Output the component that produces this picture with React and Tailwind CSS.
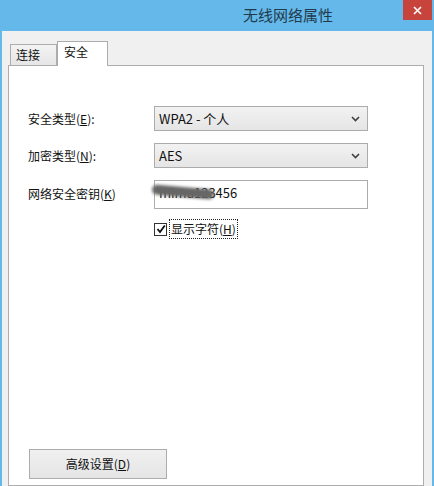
import React from "react";

function Chevron() {
  return (
    <svg width="9" height="6" viewBox="0 0 9 6" className="text-[#404040]">
      <path d="M1 1 L4.5 4.5 L8 1" fill="none" stroke="currentColor" strokeWidth="1.6" />
    </svg>
  );
}

function Select({ value }) {
  return (
    <div className="w-[214px] h-[25px] border border-[#acacac] bg-gradient-to-b from-[#f2f2f2] to-[#e5e5e5] flex items-center pl-[4px] pr-[7px] justify-between">
      <span className="text-[13px] text-[#111]">{value}</span>
      <Chevron />
    </div>
  );
}

export default function App() {
  const font = { fontFamily: '"Noto Sans CJK SC", "Noto Sans", sans-serif' };
  return (
    <div
      className="w-[434px] h-[486px] bg-[#64b9ea] relative overflow-hidden flex flex-col"
      style={font}
    >
      <div className="h-[31px] shrink-0 flex items-center pl-[243px]">
        <span className="text-[15px] text-[#1f3a4d]">无线网络属性</span>
      </div>
      <div className="absolute top-0 right-[2px] w-[29px] h-[20px] bg-[#c7443c] flex items-center justify-center">
        <svg width="9" height="9" viewBox="0 0 9 9">
          <path d="M1 1 L8 8 M8 1 L1 8" stroke="white" strokeWidth="1.6" />
        </svg>
      </div>
      <div className="flex-1 mx-[2px] bg-[#f0f0f0] pl-[6px] pr-[8px] pt-[9px] flex flex-col">
        <div className="flex items-end pl-[2px] h-[25px] relative z-10">
          <div className="w-[47px] h-[21px] border border-[#adadad] border-b-0 bg-gradient-to-b from-[#f3f3f3] to-[#e6e6e6] text-[12px] text-[#111] pl-[5px] leading-[20px]">
            连接
          </div>
          <div className="w-[51px] h-[25px] -mb-px border border-[#adadad] border-b-0 bg-white text-[12px] text-[#111] pl-[6px] leading-[19px]">
            安全
          </div>
        </div>
        <div className="flex-1 border border-[#adadad] bg-white pl-[19px] pt-[40px] flex flex-col">
          <div className="flex items-center h-[25px]">
            <span className="w-[126px] text-[12px] text-[#111]">
              安全类型(<span className="underline">E</span>):
            </span>
            <Select value="WPA2 - 个人" />
          </div>
          <div className="flex items-center h-[25px] mt-[12px]">
            <span className="w-[126px] text-[12px] text-[#111]">
              加密类型(<span className="underline">N</span>):
            </span>
            <Select value="AES" />
          </div>
          <div className="flex items-center h-[29px] mt-[12px]">
            <span className="w-[126px] text-[12px] text-[#111] -mt-[2px]">
              网络安全密钥(<span className="underline">K</span>)
            </span>
            <div className="w-[214px] h-[29px] border border-[#acacac] bg-white flex items-center pl-[4px] relative">
              <span className="text-[13px] text-[#111] -mt-[4px]">mima123456</span>
              <div className="absolute left-[-3px] top-[6px] w-[62px] h-[10px] bg-[#666] rounded-full blur-[1.5px] rotate-[5deg]" />
            </div>
          </div>
          <div className="flex items-center mt-[10px] pl-[126px]">
            <div className="w-[13px] h-[13px] border border-[#333] bg-white flex items-center justify-center">
              <svg width="10" height="10" viewBox="0 0 10 10">
                <path d="M1.5 5 L4 8 L8.8 1.5" fill="none" stroke="#111" strokeWidth="1.8" />
              </svg>
            </div>
            <div className="ml-[2px] border border-dotted border-[#222] px-[1px] h-[20px] flex items-center">
              <span className="text-[12px] text-[#111]">
                显示字符(<span className="underline">H</span>)
              </span>
            </div>
          </div>
          <div className="flex-1" />
          <div className="mb-[6px] pl-[1px]">
            <div className="w-[138px] h-[30px] border border-[#acacac] bg-gradient-to-b from-[#f0f0f0] to-[#e5e5e5] flex items-center justify-center text-[12px] text-[#111]">
              <span>
                高级设置(<span className="underline">D</span>)
              </span>
            </div>
          </div>
        </div>
      </div>
    </div>
  );
}
